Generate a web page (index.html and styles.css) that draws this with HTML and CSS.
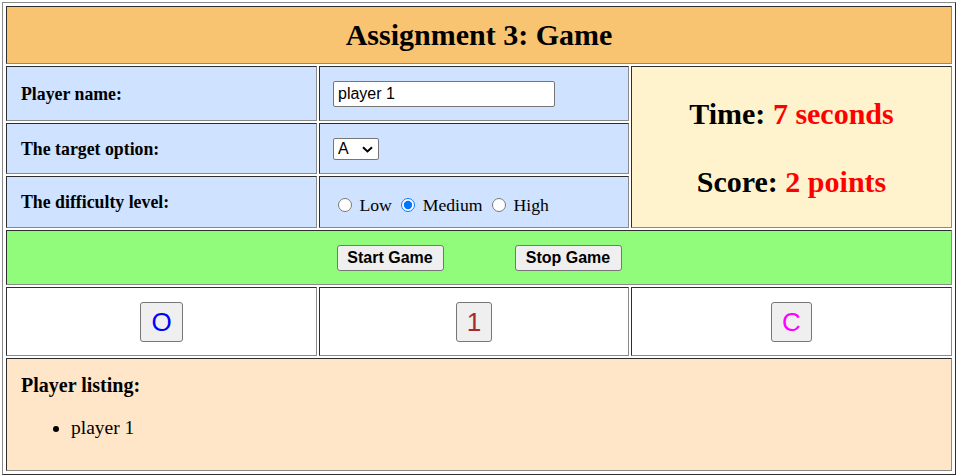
FILE: index.html
```html
<!DOCTYPE html>
<html lang="en">
<head>
<meta charset="utf-8">
<title>Assignment 3: Game</title>
<link rel="stylesheet" href="styles.css">
</head>
<body>
<div class="board">
  <div class="cell title">Assignment 3: Game</div>

  <div class="cell label">Player name:</div>
  <div class="cell field"><input class="name-input" type="text" value="player 1"></div>
  <div class="cell stats">
    <div class="stat">Time: <span class="val">7 seconds</span></div>
    <div class="stat">Score: <span class="val">2 points</span></div>
  </div>

  <div class="cell label">The target option:</div>
  <div class="cell field">
    <span class="select-wrap">
      <select class="target">
        <option selected>A</option>
        <option>B</option>
        <option>C</option>
      </select>
      <svg class="chev" width="11" height="7" viewBox="0 0 11 7"><path d="M1 1.2 L5.5 5.4 L10 1.2" fill="none" stroke="#000" stroke-width="2"/></svg>
    </span>
  </div>

  <div class="cell label">The difficulty level:</div>
  <div class="cell field">
    <div class="radios"><input type="radio" name="lvl"> Low <input type="radio" name="lvl" checked> Medium <input type="radio" name="lvl"> High</div>
  </div>

  <div class="cell controls">
    <button class="ctl-btn">Start Game</button>
    <button class="ctl-btn">Stop Game</button>
  </div>

  <div class="cell tile"><button class="tile-btn t-o">O</button></div>
  <div class="cell tile"><button class="tile-btn t-1">1</button></div>
  <div class="cell tile"><button class="tile-btn t-c">C</button></div>

  <div class="cell listing">
    <div class="listing-title">Player listing:</div>
    <ul class="players">
      <li>player 1</li>
    </ul>
  </div>
</div>
</body>
</html>
```

FILE: styles.css
```css
html, body {
  margin: 0;
  padding: 0;
  background: #ffffff;
}

body {
  font-family: "Liberation Serif", "Times New Roman", serif;
  color: #000;
}

.board {
  box-sizing: border-box;
  margin: 2px 0 0 2px;
  width: 954px;
  height: 473px;
  padding: 3px;
  border: 1px solid;
  border-color: #8a8a8a #2e2e2e #2e2e2e #8a8a8a;
  display: grid;
  grid-template-columns: 311px 310px 321px;
  grid-template-rows: 58px 55px 51px 52px 55px 69px 113px;
  gap: 2px;
}

.cell {
  box-sizing: border-box;
  border: 1px solid;
  border-color: #2e2e2e #8a8a8a #8a8a8a #2e2e2e;
  padding: 0 13px;
  display: flex;
  align-items: center;
  min-width: 0;
}

.title {
  grid-column: 1 / -1;
  background: #f8c471;
  justify-content: center;
  font-size: 30px;
  font-weight: bold;
}

.label {
  background: #cfe2ff;
  font-size: 17.8px;
  font-weight: bold;
  padding-left: 14px;
  padding-top: 1px;
}

.field {
  background: #cfe2ff;
}

.stats {
  grid-area: 2 / 3 / 5 / 4;
  background: #fff3cd;
  flex-direction: column;
  justify-content: center;
  gap: 34.5px;
  font-size: 30px;
  font-weight: bold;
  padding-top: 2px;
}

.val {
  color: #ff0000;
}

.name-input {
  box-sizing: border-box;
  width: 222px;
  height: 26px;
  margin: 0;
  padding: 1px 4px;
  border: 1px solid #767676;
  border-radius: 2px;
  background: #fff;
  font-family: "Liberation Sans", Arial, sans-serif;
  font-size: 16px;
  color: #000;
}

.select-wrap {
  position: relative;
  display: inline-block;
  width: 46px;
  height: 22px;
}

.target {
  appearance: none;
  -webkit-appearance: none;
  box-sizing: border-box;
  width: 46px;
  height: 22px;
  margin: 0;
  padding: 0 0 0 4px;
  border: 1px solid #767676;
  border-radius: 2px;
  background: #fff;
  font-family: "Liberation Sans", Arial, sans-serif;
  font-size: 16px;
  color: #000;
}

.chev {
  position: absolute;
  left: 29px;
  top: 8px;
  pointer-events: none;
}

.radios {
  font-size: 17.7px;
  line-height: 23px;
  padding-top: 6px;
}

.radios input {
  width: 14px;
  height: 14px;
  margin: 3px 3px 0 5px;
  vertical-align: -1px;
}

.controls {
  grid-column: 1 / -1;
  background: #91fb7c;
  justify-content: center;
  gap: 71px;
}

.ctl-btn {
  box-sizing: border-box;
  width: 107px;
  height: 26px;
  padding: 0;
  margin: 0;
  border: 1px solid #767676;
  border-radius: 3px;
  background: #efefef;
  font-family: "Liberation Sans", Arial, sans-serif;
  font-size: 16px;
  font-weight: bold;
  color: #000;
}

.tile {
  background: #fff;
  justify-content: center;
}

.tile-btn {
  box-sizing: border-box;
  height: 40px;
  padding: 0 10px;
  margin: 0;
  border: 1px solid #767676;
  border-radius: 3px;
  background: #efefef;
  font-family: "Liberation Sans", Arial, sans-serif;
  font-size: 26px;
  line-height: 30px;
}

.t-o { color: #0000ff; }
.t-1 { color: #a52a2a; }
.t-c { color: #ff00ff; }

.listing {
  grid-column: 1 / -1;
  background: #ffe6c9;
  display: block;
  padding: 15px 13px 0 14px;
  font-size: 19.5px;
}

.listing-title {
  font-size: 20px;
  font-weight: bold;
}

.players {
  margin: 20px 0 0 0;
  padding-left: 50px;
}
```
